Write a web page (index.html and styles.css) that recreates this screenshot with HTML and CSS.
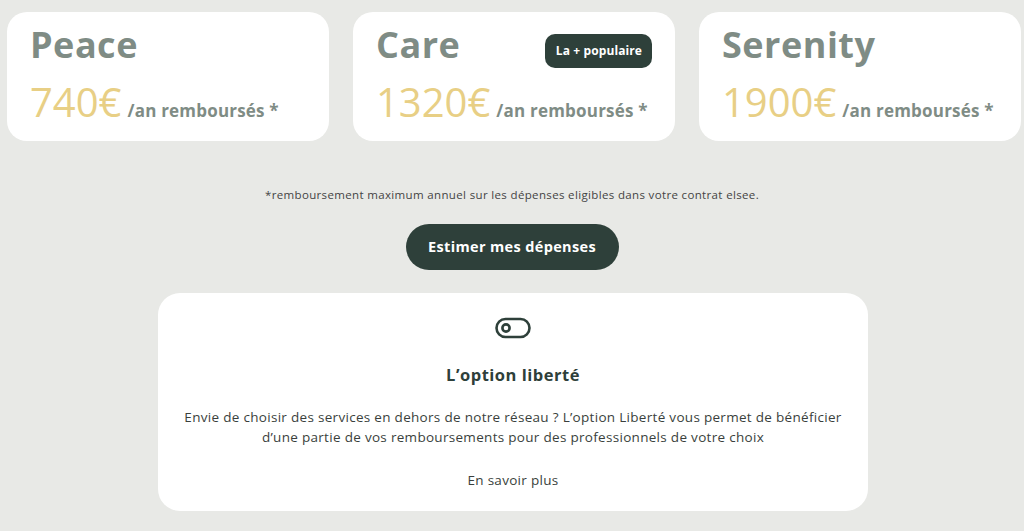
FILE: index.html
```html
<!DOCTYPE html>
<html lang="fr">
<head>
<meta charset="utf-8">
<title>Offres</title>
<link rel="stylesheet" href="styles.css">
</head>
<body>
<div class="plans">
  <div class="plan">
    <div class="plan-head"><h2 class="plan-name">Peace</h2></div>
    <p class="plan-price"><span class="amount">740€</span> <span class="unit">/an remboursés *</span></p>
  </div>
  <div class="plan">
    <div class="plan-head"><h2 class="plan-name">Care</h2><span class="badge">La + populaire</span></div>
    <p class="plan-price"><span class="amount">1320€</span> <span class="unit">/an remboursés *</span></p>
  </div>
  <div class="plan">
    <div class="plan-head"><h2 class="plan-name">Serenity</h2></div>
    <p class="plan-price"><span class="amount">1900€</span> <span class="unit">/an remboursés *</span></p>
  </div>
</div>
<p class="footnote">*remboursement maximum annuel sur les dépenses eligibles dans votre contrat elsee.</p>
<div class="cta-wrap"><a class="cta" href="#">Estimer mes dépenses</a></div>
<div class="option">
  <svg class="option-icon" width="36" height="22" viewBox="0 0 36 22" fill="none" stroke="#2e403a" stroke-width="2.6">
    <rect x="1.5" y="2" width="33" height="18" rx="9"/>
    <circle cx="11" cy="11" r="3.6"/>
  </svg>
  <h3 class="option-title">L’option liberté</h3>
  <p class="option-text">Envie de choisir des services en dehors de notre réseau ? L’option Liberté vous permet de bénéficier<br>d’une partie de vos remboursements pour des professionnels de votre choix</p>
  <a class="option-link" href="#">En savoir plus</a>
</div>
</body>
</html>
```
FILE: styles.css
```css
* { box-sizing: border-box; }
body {
  margin: 0;
  background: #e8e9e6;
  font-family: "Open Sans", "Liberation Sans", sans-serif;
  color: #2e403a;
  height: 531px;
  overflow: hidden;
}
.plans {
  display: flex;
  gap: 24px;
  padding: 12px 0 0 7px;
}
.plan {
  width: 322px;
  height: 129px;
  background: #fff;
  border-radius: 20px;
  padding: 17px 23px 0 23px;
}
.plan-head {
  display: flex;
  justify-content: space-between;
  align-items: center;
  height: 32px;
}
.plan-name {
  margin: 0;
  font-size: 36px;
  line-height: 32px;
  font-weight: 700;
  color: #7f8c85;
  letter-spacing: 0.5px;
}
.badge {
  background: #2e403a;
  color: #fff;
  font-size: 12px;
  font-weight: 700;
  border-radius: 10px;
  padding: 0 10px 0 11px;
  height: 34px;
  line-height: 34px;
  margin-top: 12px;
  letter-spacing: 0.1px;
}
.plan-price {
  margin: 23px 0 0;
  display: flex;
  align-items: baseline;
  gap: 6px;
  white-space: nowrap;
}
.amount {
  font-size: 40px;
  line-height: 36px;
  color: #e8cf85;
  font-weight: 500;
}
.unit {
  font-size: 17px;
  font-weight: 700;
  color: #7f8c85;
  letter-spacing: 0.2px;
}
.footnote {
  margin: 46px 0 0;
  text-align: center;
  font-size: 11.5px;
  line-height: 16px;
  color: #444;
  letter-spacing: 0.35px;
}
.cta-wrap {
  display: flex;
  justify-content: center;
  margin-top: 21px;
}
.cta {
  display: block;
  width: 213px;
  height: 46px;
  line-height: 46px;
  border-radius: 23px;
  background: #2e403a;
  color: #fff;
  text-align: center;
  font-weight: 700;
  font-size: 14.5px;
  letter-spacing: 0.35px;
  text-decoration: none;
}
.option {
  width: 710px;
  height: 218px;
  margin: 23px 0 0 158px;
  background: #fff;
  border-radius: 22px;
  display: flex;
  flex-direction: column;
  align-items: center;
  padding-top: 24px;
}
.option-icon { display: block; }
.option-title {
  margin: 25px 0 0;
  font-size: 16.5px;
  line-height: 22px;
  font-weight: 700;
  color: #2e403a;
  letter-spacing: 0.5px;
}
.option-text {
  margin: 21px 0 0;
  text-align: center;
  font-size: 13.5px;
  line-height: 20px;
  color: #3a3f3c;
  letter-spacing: 0.3px;
}
.option-link {
  margin-top: 23px;
  font-size: 13.5px;
  line-height: 20px;
  color: #3a3f3c;
  letter-spacing: 0.3px;
  text-decoration: none;
}
```
